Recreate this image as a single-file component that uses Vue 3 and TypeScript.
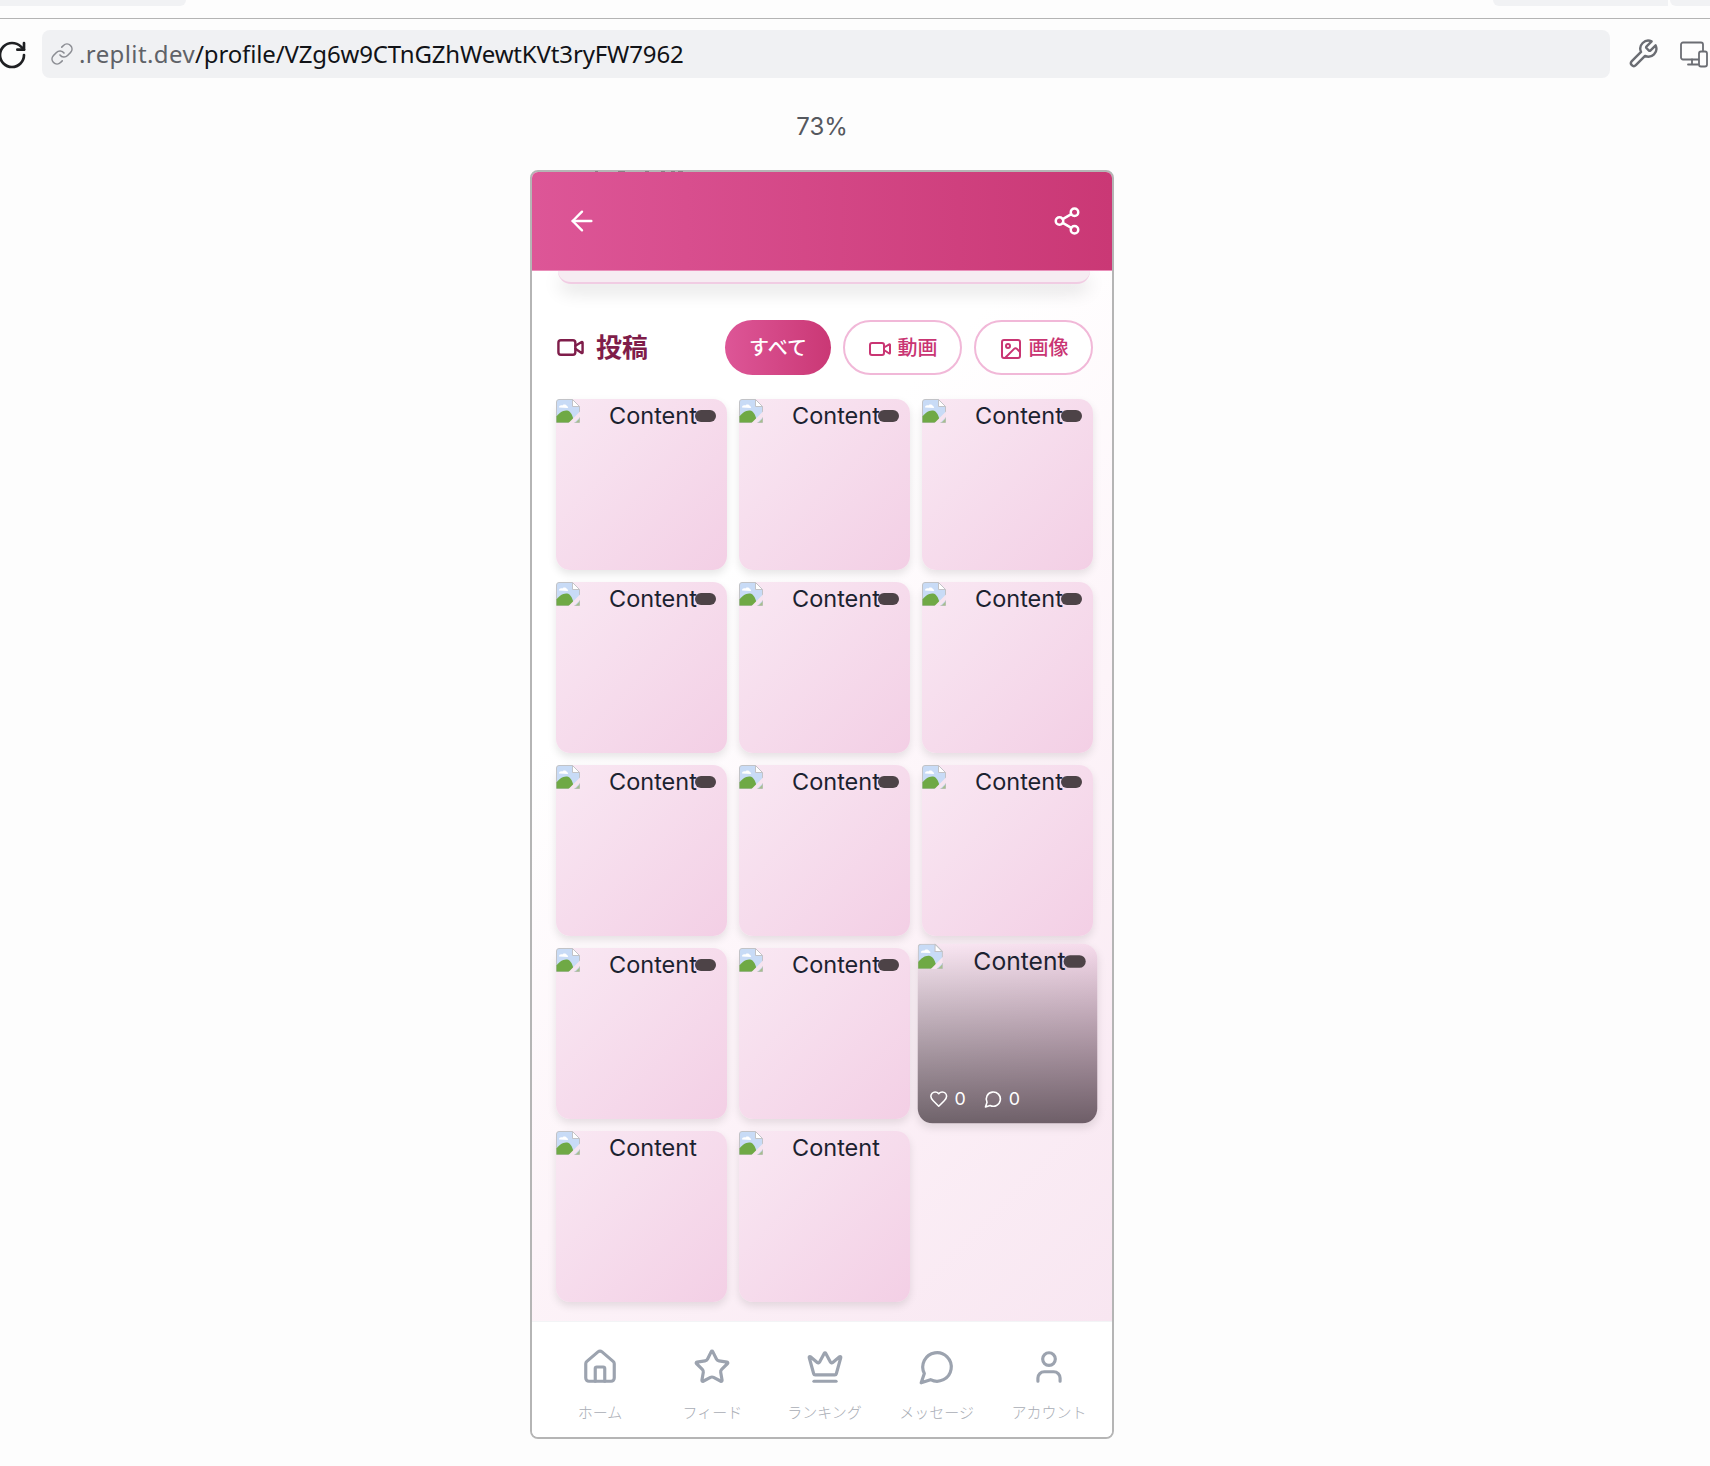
<script setup lang="ts">
const navItems = [
  { label: 'ホーム', icon: 'home' },
  { label: 'フィード', icon: 'star' },
  { label: 'ランキング', icon: 'crown' },
  { label: 'メッセージ', icon: 'message' },
  { label: 'アカウント', icon: 'user' },
]

const posts = Array.from({ length: 14 }, (_, i) => ({
  id: i,
  hovered: i === 11,
  hasBadge: i < 12,
}))

// tops of the profile text scrolled behind the header
const peekMarks = [
  { left: 65, width: 3 },
  { left: 88, width: 7 },
  { left: 115, width: 4 },
  { left: 131, width: 4 },
  { left: 141, width: 4 },
  { left: 148, width: 5 },
]
</script>

<template>
  <div class="page">
    <div class="tab-strip">
      <div class="tab tab-left"></div>
      <div class="tab tab-right"></div>
      <div class="tab tab-end"></div>
    </div>

    <div class="toolbar">
      <svg class="reload" viewBox="0 0 24 24" fill="none" stroke="#1f2023" stroke-width="2" stroke-linecap="round" stroke-linejoin="round">
        <path d="M21 12a9 9 0 1 1-9-9c2.52 0 4.93 1 6.74 2.74L21 8" />
        <path d="M21 3v5h-5" />
      </svg>
      <div class="url-bar">
        <svg class="link-icon" viewBox="0 0 24 24" fill="none" stroke="#8b8d93" stroke-width="1.6" stroke-linecap="round" stroke-linejoin="round">
          <path d="M10 13a5 5 0 0 0 7.54.54l3-3a5 5 0 0 0-7.07-7.07l-1.72 1.71" />
          <path d="M14 11a5 5 0 0 0-7.54-.54l-3 3a5 5 0 0 0 7.07 7.07l1.71-1.71" />
        </svg>
        <span class="url-host">.replit.dev</span><span class="url-path">/profile/VZg6w9CTnGZhWewtKVt3ryFW7962</span>
      </div>
      <svg class="tool-icon wrench" viewBox="0 0 24 24" fill="none" stroke="#6b6d73" stroke-width="1.8" stroke-linecap="round" stroke-linejoin="round">
        <path d="M14.7 6.3a1 1 0 0 0 0 1.4l1.6 1.6a1 1 0 0 0 1.4 0l3.77-3.77a6 6 0 0 1-7.94 7.94l-6.91 6.91a2.12 2.12 0 0 1-3-3l6.91-6.91a6 6 0 0 1 7.94-7.94l-3.76 3.76z" />
      </svg>
      <svg class="tool-icon devices" viewBox="0 0 28 26" fill="none" stroke="#6b6d73" stroke-width="1.8" stroke-linecap="round" stroke-linejoin="round">
        <path d="M19 18H3a2 2 0 0 1-2-2V3a2 2 0 0 1 2-2h18a2 2 0 0 1 2 2v6" />
        <path d="M12 18v5M8 23h10" />
        <rect x="19" y="10" width="8" height="15" rx="2" fill="#fdfdfd" />
      </svg>
    </div>

    <div class="zoom-label">73%</div>

    <div class="phone-wrap">
      <div class="phone">
        <header class="app-header">
          <svg class="back-icon" viewBox="0 0 24 24" fill="none" stroke="#fff" stroke-width="1.8" stroke-linecap="round" stroke-linejoin="round">
            <path d="m12 19-7-7 7-7" />
            <path d="M19 12H5" />
          </svg>
          <svg class="share-icon" viewBox="0 0 24 24" fill="none" stroke="#fff" stroke-width="2" stroke-linecap="round" stroke-linejoin="round">
            <circle cx="18" cy="5" r="3" />
            <circle cx="6" cy="12" r="3" />
            <circle cx="18" cy="19" r="3" />
            <line x1="8.59" y1="13.51" x2="15.42" y2="17.49" />
            <line x1="15.41" y1="6.51" x2="8.59" y2="10.49" />
          </svg>
        </header>

        <main class="content">
          <div class="profile-card-edge"></div>

          <div class="section-head">
            <div class="section-title">
              <svg class="title-icon" viewBox="0 0 24 24" fill="none" stroke="currentColor" stroke-width="2" stroke-linecap="round" stroke-linejoin="round">
                <path d="m16 13 5.223 3.482a.5.5 0 0 0 .777-.416V7.87a.5.5 0 0 0-.752-.432L16 10.5" />
                <rect x="2" y="6" width="14" height="12" rx="2" />
              </svg>
              <span>投稿</span>
            </div>
            <div class="filters">
              <button class="filter filter-active">すべて</button>
              <button class="filter">
                <svg viewBox="0 0 24 24" fill="none" stroke="currentColor" stroke-width="2" stroke-linecap="round" stroke-linejoin="round">
                  <path d="m16 13 5.223 3.482a.5.5 0 0 0 .777-.416V7.87a.5.5 0 0 0-.752-.432L16 10.5" />
                  <rect x="2" y="6" width="14" height="12" rx="2" />
                </svg>
                動画
              </button>
              <button class="filter">
                <svg viewBox="0 0 24 24" fill="none" stroke="currentColor" stroke-width="2" stroke-linecap="round" stroke-linejoin="round">
                  <rect x="3" y="3" width="18" height="18" rx="2" />
                  <circle cx="9" cy="9" r="2" />
                  <path d="m21 15-3.086-3.086a2 2 0 0 0-2.828 0L6 21" />
                </svg>
                画像
              </button>
            </div>
          </div>

          <div class="grid">
            <div v-for="post in posts" :key="post.id" class="post" :class="{ 'post-hovered': post.hovered }">
              <div v-if="post.hovered" class="overlay">
                <div class="stats">
                  <svg viewBox="0 0 24 24" fill="none" stroke="#fff" stroke-width="2" stroke-linecap="round" stroke-linejoin="round">
                    <path d="M19 14c1.49-1.46 3-3.21 3-5.5A5.5 5.5 0 0 0 16.5 3c-1.76 0-3 .5-4.5 2-1.5-1.5-2.74-2-4.5-2A5.5 5.5 0 0 0 2 8.5c0 2.3 1.5 4.05 3 5.5l7 7Z" />
                  </svg>
                  <span>0</span>
                  <svg class="comment" viewBox="0 0 24 24" fill="none" stroke="#fff" stroke-width="2" stroke-linecap="round" stroke-linejoin="round">
                    <path d="M7.9 20A9 9 0 1 0 4 16.1L2 22Z" />
                  </svg>
                  <span>0</span>
                </div>
              </div>
              <div class="post-alt">
                <svg class="broken" viewBox="0 0 24 24">
                  <path d="M.5 23.5V3A2.5 2.5 0 0 1 3 .5h13.5l7 7v16z" fill="#c8dbf6" stroke="#c2c3c7" />
                  <path d="M16.5.5v7h7z" fill="#fff" stroke="#c2c3c7" />
                  <path d="M3 8.5C3 6.5 5 6 6.2 6.600 7 4.800 10.500 5 11 7.200c1.200 0 1.600 1.300.6 1.700z" fill="#fff" />
                  <path d="M.5 23.5v-6C3 14 7 11 11 11.500c3.500.5 6 5 7 12z" fill="#6fa945" />
                  <path d="M12.5 24 24 12.5v5.5L18 24z" fill="#f6e4ef" />
                  <path d="M19.5 23.500h4V19.500z" fill="#a7bd8f" />
                </svg>
                <span>Content</span>
              </div>
              <div v-if="post.hasBadge" class="badge"></div>
            </div>
          </div>
        </main>

        <nav class="bottom-nav">
          <div v-for="item in navItems" :key="item.label" class="nav-item">
            <svg viewBox="0 0 24 24" fill="none" stroke="currentColor" stroke-width="2" stroke-linecap="round" stroke-linejoin="round">
              <template v-if="item.icon === 'home'">
                <path d="M15 21v-8a1 1 0 0 0-1-1h-4a1 1 0 0 0-1 1v8" />
                <path d="M3 10a2 2 0 0 1 .709-1.528l7-5.999a2 2 0 0 1 2.582 0l7 5.999A2 2 0 0 1 21 10v9a2 2 0 0 1-2 2H5a2 2 0 0 1-2-2z" />
              </template>
              <path v-else-if="item.icon === 'star'" d="M11.525 2.295a.53.53 0 0 1 .95 0l2.31 4.679a2.123 2.123 0 0 0 1.595 1.16l5.166.756a.53.53 0 0 1 .294.904l-3.736 3.638a2.123 2.123 0 0 0-.611 1.878l.882 5.14a.53.53 0 0 1-.771.56l-4.618-2.428a2.122 2.122 0 0 0-1.973 0L6.396 21.01a.53.53 0 0 1-.77-.56l.881-5.139a2.122 2.122 0 0 0-.611-1.879L2.16 9.795a.53.53 0 0 1 .294-.906l5.165-.755a2.122 2.122 0 0 0 1.597-1.16z" />
              <template v-else-if="item.icon === 'crown'">
                <path d="M11.562 3.266a.5.5 0 0 1 .876 0L15.39 8.87a1 1 0 0 0 1.516.294L21.183 5.5a.5.5 0 0 1 .798.519l-2.834 10.246a1 1 0 0 1-.956.734H5.81a1 1 0 0 1-.957-.734L2.02 6.02a.5.5 0 0 1 .798-.519l4.276 3.664a1 1 0 0 0 1.516-.294z" />
                <path d="M5 21h14" />
              </template>
              <path v-else-if="item.icon === 'message'" d="M7.9 20A9 9 0 1 0 4 16.1L2 22Z" />
              <template v-else>
                <path d="M19 21v-2a4 4 0 0 0-4-4H9a4 4 0 0 0-4 4v2" />
                <circle cx="12" cy="7" r="4" />
              </template>
            </svg>
            <span>{{ item.label }}</span>
          </div>
        </nav>
      </div>
      <i v-for="mark in peekMarks" :key="mark.left" class="peek" :style="{ left: mark.left + 'px', width: mark.width + 'px' }"></i>
    </div>
  </div>
</template>

<style scoped>
.page {
  width: 1710px;
  height: 1466px;
  overflow: hidden;
  background: #fdfdfd;
  font-family: Inter, "Noto Sans CJK JP", sans-serif;
}

.tab-strip {
  display: flex;
  height: 18px;
  border-bottom: 1px solid #b4b4b4;
}

.tab {
  height: 6px;
  background: #f1f2f4;
}

.tab-left {
  width: 186px;
  margin-right: auto;
  border-radius: 0 0 8px 0;
}

.tab-right {
  width: 175px;
  margin-right: 2px;
  border-radius: 0 0 0 8px;
}

.tab-end {
  width: 40px;
  border-radius: 0 0 0 6px;
}

.toolbar {
  display: flex;
  align-items: center;
  height: 48px;
  margin-top: 11px;
}

.reload {
  width: 32px;
  height: 32px;
  margin-top: 1px;
  margin-left: -4px;
  margin-right: 14px;
  flex-shrink: 0;
}

.url-bar {
  display: flex;
  align-items: center;
  width: 1568px;
  height: 48px;
  padding-left: 8px;
  padding-bottom: 2px;
  box-sizing: border-box;
  border-radius: 8px;
  background: #f0f1f3;
  font-family: "Noto Sans", sans-serif;
  font-size: 24px;
  white-space: nowrap;
}

.link-icon {
  width: 24px;
  height: 24px;
  margin-top: 2px;
  margin-right: 5px;
  flex-shrink: 0;
}

.url-host {
  color: #5f6268;
  letter-spacing: 0.4px;
}

.url-path {
  color: #111317;
  letter-spacing: -0.15px;
}

.tool-icon {
  flex-shrink: 0;
}

.wrench {
  width: 32px;
  height: 32px;
  margin-left: 17px;
}

.devices {
  width: 28px;
  height: 27px;
  margin-left: 21px;
}

.zoom-label {
  margin-top: 35px;
  height: 28px;
  line-height: 28px;
  text-align: center;
  font-size: 24px;
  color: #55585e;
  padding-right: 66px;
}

.phone-wrap {
  position: relative;
  width: 584px;
  margin-top: 29px;
  margin-left: 530px;
}

.peek {
  position: absolute;
  top: 1px;
  height: 1px;
  background: #8a8286;
}

.phone {
  display: flex;
  flex-direction: column;
  height: 1269px;
  box-sizing: border-box;
  border: 2px solid #b5b5b5;
  border-radius: 8px;
  overflow: hidden;
  background: #fff;
}

.app-header {
  display: flex;
  align-items: center;
  justify-content: space-between;
  flex-shrink: 0;
  height: 99px;
  padding: 0 30px 1px 34px;
  background: linear-gradient(90deg, #dd5697, #ca3875);
  border-bottom: 1px solid #ea8fba;
  box-sizing: border-box;
}

.back-icon {
  width: 32px;
  height: 32px;
}

.share-icon {
  width: 30px;
  height: 30px;
}

.content {
  flex: 1;
  min-height: 0;
  overflow: hidden;
  background: linear-gradient(135deg, #ffffff 30%, #fdf4f9 60%, #f8e6f1 100%);
}

.profile-card-edge {
  height: 11px;
  margin: 0 22px 0 26px;
  border-radius: 0 0 18px 18px;
  background: #f6ecf2;
  border-bottom: 2px solid #f1cce3;
  box-shadow: 0 8px 18px rgba(0, 0, 0, 0.12);
}

.section-head {
  display: flex;
  align-items: center;
  justify-content: space-between;
  height: 55px;
  margin-top: 36px;
  padding: 0 19px 0 24px;
}

.section-title {
  display: flex;
  align-items: center;
  gap: 11px;
  color: #7f1d4a;
  font-size: 26px;
  font-weight: 700;
}

.section-title span {
  margin-top: -4px;
}

.title-icon {
  width: 29px;
  height: 29px;
}

.filters {
  display: flex;
  gap: 12px;
}

.filter {
  display: flex;
  align-items: center;
  justify-content: center;
  gap: 6px;
  width: 119px;
  height: 55px;
  padding: 0 0 2px;
  border: 2px solid #f1b8d8;
  border-radius: 28px;
  background: #fff;
  color: #c93573;
  font-family: inherit;
  font-size: 20px;
  font-weight: 500;
}

.filter svg {
  width: 24px;
  height: 24px;
  margin-top: 4px;
}

.filter-active {
  width: 106px;
  border: none;
  background: linear-gradient(90deg, #dd5697, #ca3875);
  color: #fff;
}

.grid {
  display: grid;
  grid-template-columns: repeat(3, 171px);
  grid-auto-rows: 171px;
  gap: 12px;
  margin-top: 24px;
  padding: 0 24px;
}

.post {
  position: relative;
  border-radius: 14px;
  background: linear-gradient(135deg, #f9e8f3, #f3cfe5);
  box-shadow: 0 4px 8px rgba(0, 0, 0, 0.1);
}

.post-hovered {
  transform: scale(1.05);
}

.post-alt {
  position: relative;
  display: flex;
  align-items: flex-start;
  color: #1c2230;
  font-size: 23.5px;
  line-height: 33px;
}

.broken {
  width: 24px;
  height: 24px;
  margin-right: 29px;
  flex-shrink: 0;
}

.badge {
  position: absolute;
  top: 11px;
  right: 11px;
  width: 21px;
  height: 12px;
  border-radius: 6px;
  background: #4d4347;
}

.overlay {
  position: absolute;
  inset: 0;
  display: flex;
  align-items: flex-end;
  padding: 0 0 13px 11px;
  border-radius: 14px;
  background: linear-gradient(180deg, rgba(0, 0, 0, 0), rgba(0, 0, 0, 0.55));
  color: #fff;
  font-size: 17px;
}

.stats {
  display: flex;
  align-items: center;
  gap: 6px;
}

.stats svg {
  width: 18px;
  height: 18px;
}

.stats .comment {
  margin-left: 11px;
}

.bottom-nav {
  display: flex;
  flex-shrink: 0;
  height: 116px;
  padding: 0 7px 0 12px;
  border-top: 1px solid #f3f4f6;
  box-sizing: border-box;
  background: #fff;
}

.nav-item {
  display: flex;
  flex: 1;
  flex-direction: column;
  align-items: center;
  padding-top: 26px;
  color: #9ca3af;
  font-size: 15px;
  font-weight: 300;
}

.nav-item svg {
  width: 38px;
  height: 38px;
  margin-bottom: 15px;
}

.nav-item span {
  color: #a9adb5;
  white-space: nowrap;
}
</style>
